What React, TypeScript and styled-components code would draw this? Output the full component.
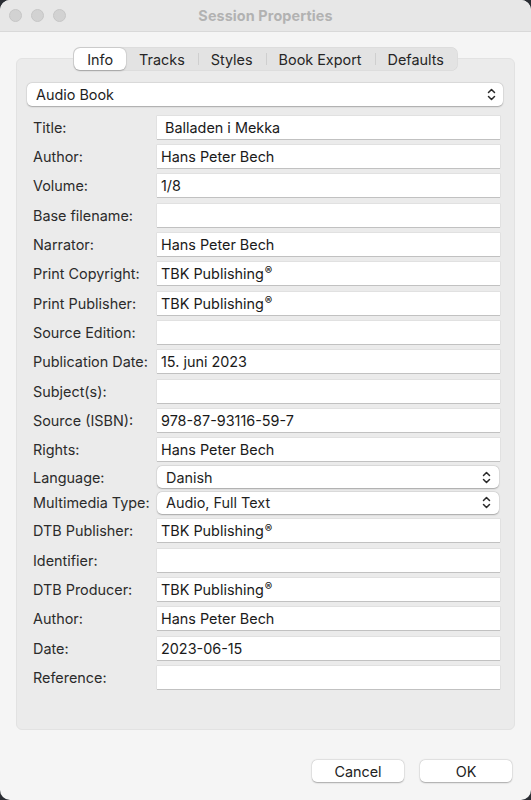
import React from 'react';
import styled, { createGlobalStyle } from 'styled-components';

const GlobalStyle = createGlobalStyle`
  html, body {
    margin: 0;
    padding: 0;
    background: #2a2d33;
  }
  * {
    box-sizing: border-box;
  }
`;

const Window = styled.div`
  width: 531px;
  height: 800px;
  background: #f5f5f5;
  border-radius: 10px;
  overflow: hidden;
  display: flex;
  flex-direction: column;
  font-family: Inter, 'Liberation Sans', sans-serif;
  font-size: 14.4px;
  color: #222;
`;

const TitleBar = styled.div`
  position: relative;
  height: 32px;
  flex: none;
  display: flex;
  align-items: center;
  justify-content: center;
  background: #e7e7e7;
  border-bottom: 1px solid #d9d9d9;
`;

const Lights = styled.div`
  position: absolute;
  left: 9px;
  top: 9px;
  display: flex;
  gap: 9px;
`;

const Light = styled.span`
  width: 13px;
  height: 13px;
  border-radius: 50%;
  background: #d2d2d2;
  border: 0.5px solid #c6c6c6;
`;

const WindowTitle = styled.div`
  font-weight: 700;
  font-size: 14.4px;
  color: #b2b2b2;
  letter-spacing: 0.1px;
`;

const Content = styled.div`
  flex: 1;
  display: flex;
  flex-direction: column;
  padding: 15px 16px 0 16px;
`;

const TabBar = styled.div`
  align-self: center;
  position: relative;
  z-index: 1;
  display: flex;
  align-items: center;
  height: 24px;
  padding: 1px;
  margin: 0 0 -13px 0;
  border-radius: 7px;
  background: #e3e3e3;
  box-shadow: inset 0 0 0 0.5px rgba(0, 0, 0, 0.05);
`;

const Tab = styled.div<{ $active?: boolean; $sep?: boolean }>`
  position: relative;
  height: 22px;
  display: flex;
  align-items: center;
  padding: 0 13px;
  border-radius: 6px;
  color: #262626;
  background: ${(p) => (p.$active ? '#ffffff' : 'transparent')};
  box-shadow: ${(p) =>
    p.$active ? '0 0.5px 1.5px rgba(0,0,0,0.25), 0 0 0 0.5px rgba(0,0,0,0.06)' : 'none'};

  &::before {
    content: '';
    display: ${(p) => (p.$sep ? 'block' : 'none')};
    position: absolute;
    left: 0;
    top: 5px;
    height: 12px;
    width: 1px;
    background: #cfcfcf;
  }
`;

const GroupBox = styled.div`
  height: 672px;
  flex: none;
  background: #ebebeb;
  border: 1px solid #e2e2e2;
  border-radius: 6px;
  padding: 24px 11px 0 10px;
  display: flex;
  flex-direction: column;
`;

const PopupButton = styled.div<{ $pad?: string }>`
  height: ${(p) => (p.$pad ? '22px' : '23px')};
  display: flex;
  align-items: center;
  justify-content: space-between;
  background: #fff;
  border-radius: 5px;
  padding: ${(p) => p.$pad || '0 7px 0 9px'};
  box-shadow: 0 0.5px 1.5px rgba(0, 0, 0, 0.28), 0 0 0 0.5px rgba(0, 0, 0, 0.05);
  color: #1f1f1f;
`;

const Form = styled.div`
  display: flex;
  flex-direction: column;
  gap: 6.35px;
  padding: 9.5px 3px 0 6px;
`;

const Row = styled.div<{ $select?: boolean }>`
  display: grid;
  grid-template-columns: 124px 1fr;
  align-items: center;
  margin: ${(p) => (p.$select ? '-1.5px 1px -1px 0' : '0')};
`;

const Label = styled.div`
  color: #2b2b2b;
  white-space: nowrap;
`;

const TextField = styled.div`
  height: 23px;
  display: flex;
  align-items: center;
  padding: 0 4px;
  background: #fff;
  box-shadow: 0 0 0 0.5px rgba(0, 0, 0, 0.08), 0 1px 0 rgba(0, 0, 0, 0.14);
  color: #1a1a1a;
  white-space: pre;
`;

const Reg = styled.span`
  font-size: 0.78em;
  font-weight: 600;
  position: relative;
  top: -0.2em;
  margin-left: 1px;
`;

const Footer = styled.div`
  flex: 1;
  display: flex;
  justify-content: flex-end;
  align-items: flex-end;
  gap: 16px;
  padding: 0 3px 18px 0;
`;

const Button = styled.div`
  width: 92px;
  height: 22px;
  display: flex;
  align-items: center;
  justify-content: center;
  background: #fff;
  border-radius: 5px;
  box-shadow: 0 0.5px 1.5px rgba(0, 0, 0, 0.3), 0 0 0 0.5px rgba(0, 0, 0, 0.05);
  color: #222;
`;

const Chevrons = () => (
  <svg width="9" height="13" viewBox="0 0 9 13" fill="none">
    <path d="M1.5 4.5 L4.5 1.5 L7.5 4.5" stroke="#2a2a2a" strokeWidth="1.5" strokeLinecap="round" strokeLinejoin="round" />
    <path d="M1.5 8.5 L4.5 11.5 L7.5 8.5" stroke="#2a2a2a" strokeWidth="1.5" strokeLinecap="round" strokeLinejoin="round" />
  </svg>
);

type Field = { label: string; value?: string; select?: boolean };

const TBK = 'TBK Publishing';

const fields: Field[] = [
  { label: 'Title:', value: ' Balladen i Mekka' },
  { label: 'Author:', value: 'Hans Peter Bech' },
  { label: 'Volume:', value: '1/8' },
  { label: 'Base filename:' },
  { label: 'Narrator:', value: 'Hans Peter Bech' },
  { label: 'Print Copyright:', value: TBK },
  { label: 'Print Publisher:', value: TBK },
  { label: 'Source Edition:' },
  { label: 'Publication Date:', value: '15. juni 2023' },
  { label: 'Subject(s):' },
  { label: 'Source (ISBN):', value: '978-87-93116-59-7' },
  { label: 'Rights:', value: 'Hans Peter Bech' },
  { label: 'Language:', value: 'Danish', select: true },
  { label: 'Multimedia Type:', value: 'Audio, Full Text', select: true },
  { label: 'DTB Publisher:', value: TBK },
  { label: 'Identifier:' },
  { label: 'DTB Producer:', value: TBK },
  { label: 'Author:', value: 'Hans Peter Bech' },
  { label: 'Date:', value: '2023-06-15' },
  { label: 'Reference:' },
];

const tabs = ['Info', 'Tracks', 'Styles', 'Book Export', 'Defaults'];

const renderValue = (v?: string) =>
  v === TBK ? (
    <>
      {TBK}
      <Reg>®</Reg>
    </>
  ) : (
    v
  );

export default function App() {
  return (
    <>
      <GlobalStyle />
      <Window>
        <TitleBar>
          <Lights>
            <Light />
            <Light />
            <Light />
          </Lights>
          <WindowTitle>Session Properties</WindowTitle>
        </TitleBar>
        <Content>
          <TabBar>
            {tabs.map((t, i) => (
              <Tab key={t} $active={i === 0} $sep={i > 1}>
                {t}
              </Tab>
            ))}
          </TabBar>
          <GroupBox>
            <PopupButton>
              <span>Audio Book</span>
              <Chevrons />
            </PopupButton>
            <Form>
              {fields.map((f, i) => (
                <Row key={i} $select={f.select}>
                  <Label>{f.label}</Label>
                  {f.select ? (
                    <PopupButton $pad="0 8px 0 9px">
                      <span>{f.value}</span>
                      <Chevrons />
                    </PopupButton>
                  ) : (
                    <TextField>{renderValue(f.value)}</TextField>
                  )}
                </Row>
              ))}
            </Form>
          </GroupBox>
          <Footer>
            <Button>Cancel</Button>
            <Button>OK</Button>
          </Footer>
        </Content>
      </Window>
    </>
  );
}
